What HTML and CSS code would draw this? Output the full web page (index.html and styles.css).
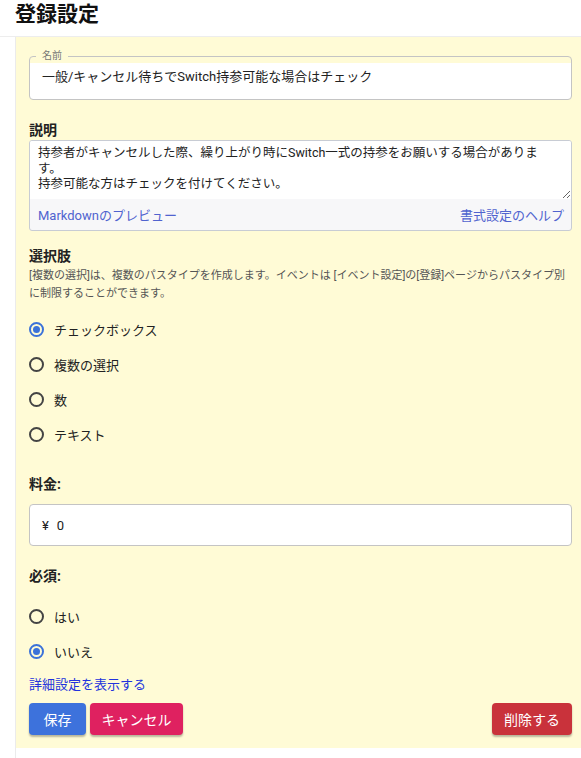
FILE: index.html
```html
<!DOCTYPE html>
<html lang="ja">
<head>
<meta charset="utf-8">
<title>登録設定</title>
<link rel="stylesheet" href="styles.css">
</head>
<body>
<header class="page-head">
  <h1 class="page-title">登録設定</h1>
</header>
<div class="content">
  <form class="panel">
    <fieldset class="outlined">
      <legend class="outlined-legend">名前</legend>
      <div class="outlined-value">一般/キャンセル待ちでSwitch持参可能な場合はチェック</div>
    </fieldset>

    <div class="field-label first-gap">説明</div>
    <div class="md-box">
      <textarea class="md-text">持参者がキャンセルした際、繰り上がり時にSwitch一式の持参をお願いする場合があります。
持参可能な方はチェックを付けてください。</textarea>
      <div class="md-foot">
        <a class="md-link" href="#">Markdownのプレビュー</a>
        <a class="md-link" href="#">書式設定のヘルプ</a>
      </div>
    </div>

    <div class="field-label choice-gap">選択肢</div>
    <p class="help">[複数の選択]は、複数のパスタイプを作成します。イベントは [イベント設定]の[登録]ページからパスタイプ別に制限することができます。</p>
    <div class="radio-group group-a">
      <label class="radio-row"><span class="radio checked"></span><span>チェックボックス</span></label>
      <label class="radio-row"><span class="radio"></span><span>複数の選択</span></label>
      <label class="radio-row"><span class="radio"></span><span>数</span></label>
      <label class="radio-row"><span class="radio"></span><span>テキスト</span></label>
    </div>

    <div class="field-label price-gap">料金:</div>
    <div class="price-box"><span class="yen">¥</span><span class="price-val">0</span></div>

    <div class="field-label req-gap">必須:</div>
    <div class="radio-group group-b">
      <label class="radio-row"><span class="radio"></span><span>はい</span></label>
      <label class="radio-row"><span class="radio checked"></span><span>いいえ</span></label>
    </div>

    <a class="adv-link" href="#">詳細設定を表示する</a>

    <div class="actions">
      <div class="actions-left">
        <button type="button" class="btn btn-save">保存</button>
        <button type="button" class="btn btn-cancel">キャンセル</button>
      </div>
      <button type="button" class="btn btn-delete">削除する</button>
    </div>
  </form>
</div>
</body>
</html>
```
FILE: styles.css
```css
html, body {
  margin: 0;
  padding: 0;
  background: #ffffff;
}
body {
  font-family: Roboto, "Noto Sans CJK JP", sans-serif;
  color: #222;
  font-size: 13px;
}
.page-head {
  height: 36px;
  border-bottom: 1px solid #ededed;
  box-sizing: content-box;
}
.page-title {
  margin: 0;
  padding-left: 15px;
  font-size: 21px;
  line-height: 29px;
  font-weight: 700;
  color: #111;
}
.content {
  margin-left: 15px;
  border-left: 1px solid #ebebeb;
  min-height: 721px;
}
.panel {
  background: #fffbd6;
  padding: 13px 9px 13px 13px;
  display: flex;
  flex-direction: column;
}
.outlined {
  margin: 0;
  padding: 0 12px 7px 12px;
  border: 1px solid #c4c4c4;
  border-radius: 4px;
  background: linear-gradient(#fffbd6 0, #fffbd6 6px, #ffffff 6px);
  min-width: 0;
}
.outlined-legend {
  margin-left: -6px;
  padding: 0 6px;
  font-size: 10px;
  line-height: 12px;
  color: #777;
}
.outlined-value {
  height: 30px;
  line-height: 30px;
  font-size: 13px;
  color: #222;
}
.field-label {
  font-size: 14px;
  font-weight: 700;
  line-height: 20px;
  color: #222;
}
.first-gap { margin-top: 20px; }
.md-box {
  border: 1px solid #c8ccd4;
  border-radius: 3px;
  background: #f7f7f9;
  overflow: hidden;
}
.md-text {
  display: block;
  width: 100%;
  box-sizing: border-box;
  height: 58px;
  margin: 0;
  border: none;
  outline: none;
  background: #ffffff;
  padding: 4px 18px 2px 8px;
  font-family: Roboto, "Noto Sans CJK JP", sans-serif;
  font-size: 12.5px;
  line-height: 15.5px;
  color: #222;
  overflow: hidden;
  resize: vertical;
}
.md-foot {
  height: 31px;
  display: flex;
  justify-content: space-between;
  align-items: center;
  padding: 0 7px 0 8px;
}
.md-link {
  color: #5063cf;
  text-decoration: none;
  font-size: 13px;
}
.choice-gap { margin-top: 15px; }
.help {
  margin: 1px 0 0 0;
  font-size: 11px;
  line-height: 18px;
  color: #555;
}
.radio-group {
  display: flex;
  flex-direction: column;
}
.group-a { margin-top: 9px; }
.group-b { margin-top: 13px; }
.radio-row {
  height: 35px;
  display: flex;
  align-items: center;
  gap: 10px;
  font-size: 13px;
  color: #222;
}
.radio {
  width: 15px;
  height: 15px;
  box-sizing: border-box;
  border: 2px solid #444;
  border-radius: 50%;
  display: flex;
  align-items: center;
  justify-content: center;
  background: transparent;
}
.radio.checked {
  border-color: #3b72d9;
}
.radio.checked::after {
  content: "";
  width: 7px;
  height: 7px;
  border-radius: 50%;
  background: #3b72d9;
}
.price-gap { margin-top: 22px; }
.price-box {
  margin-top: 10px;
  height: 42px;
  box-sizing: border-box;
  border: 1px solid #c4c4c4;
  border-radius: 4px;
  background: #ffffff;
  display: flex;
  align-items: center;
  padding-left: 12px;
  font-size: 13px;
  color: #222;
}
.yen { margin-right: 8px; }
.req-gap { margin-top: 20px; }
.adv-link {
  margin-top: 6px;
  line-height: 20px;
  font-size: 13px;
  color: #2233dd;
  text-decoration: none;
  align-self: flex-start;
}
.actions {
  margin-top: 8px;
  display: flex;
  justify-content: space-between;
  align-items: center;
}
.actions-left {
  display: flex;
  gap: 4px;
}
.btn {
  height: 32px;
  border: none;
  border-radius: 4px;
  color: #ffffff;
  font-family: Roboto, "Noto Sans CJK JP", sans-serif;
  font-size: 14px;
  padding: 0;
  white-space: nowrap;
  box-shadow: 0 2px 2px rgba(0, 0, 0, 0.28);
  cursor: pointer;
}
.btn-save { background: #3d72dc; width: 57px; }
.btn-cancel { background: #df2160; width: 93px; }
.btn-delete { background: #c9323b; width: 80px; }
```
